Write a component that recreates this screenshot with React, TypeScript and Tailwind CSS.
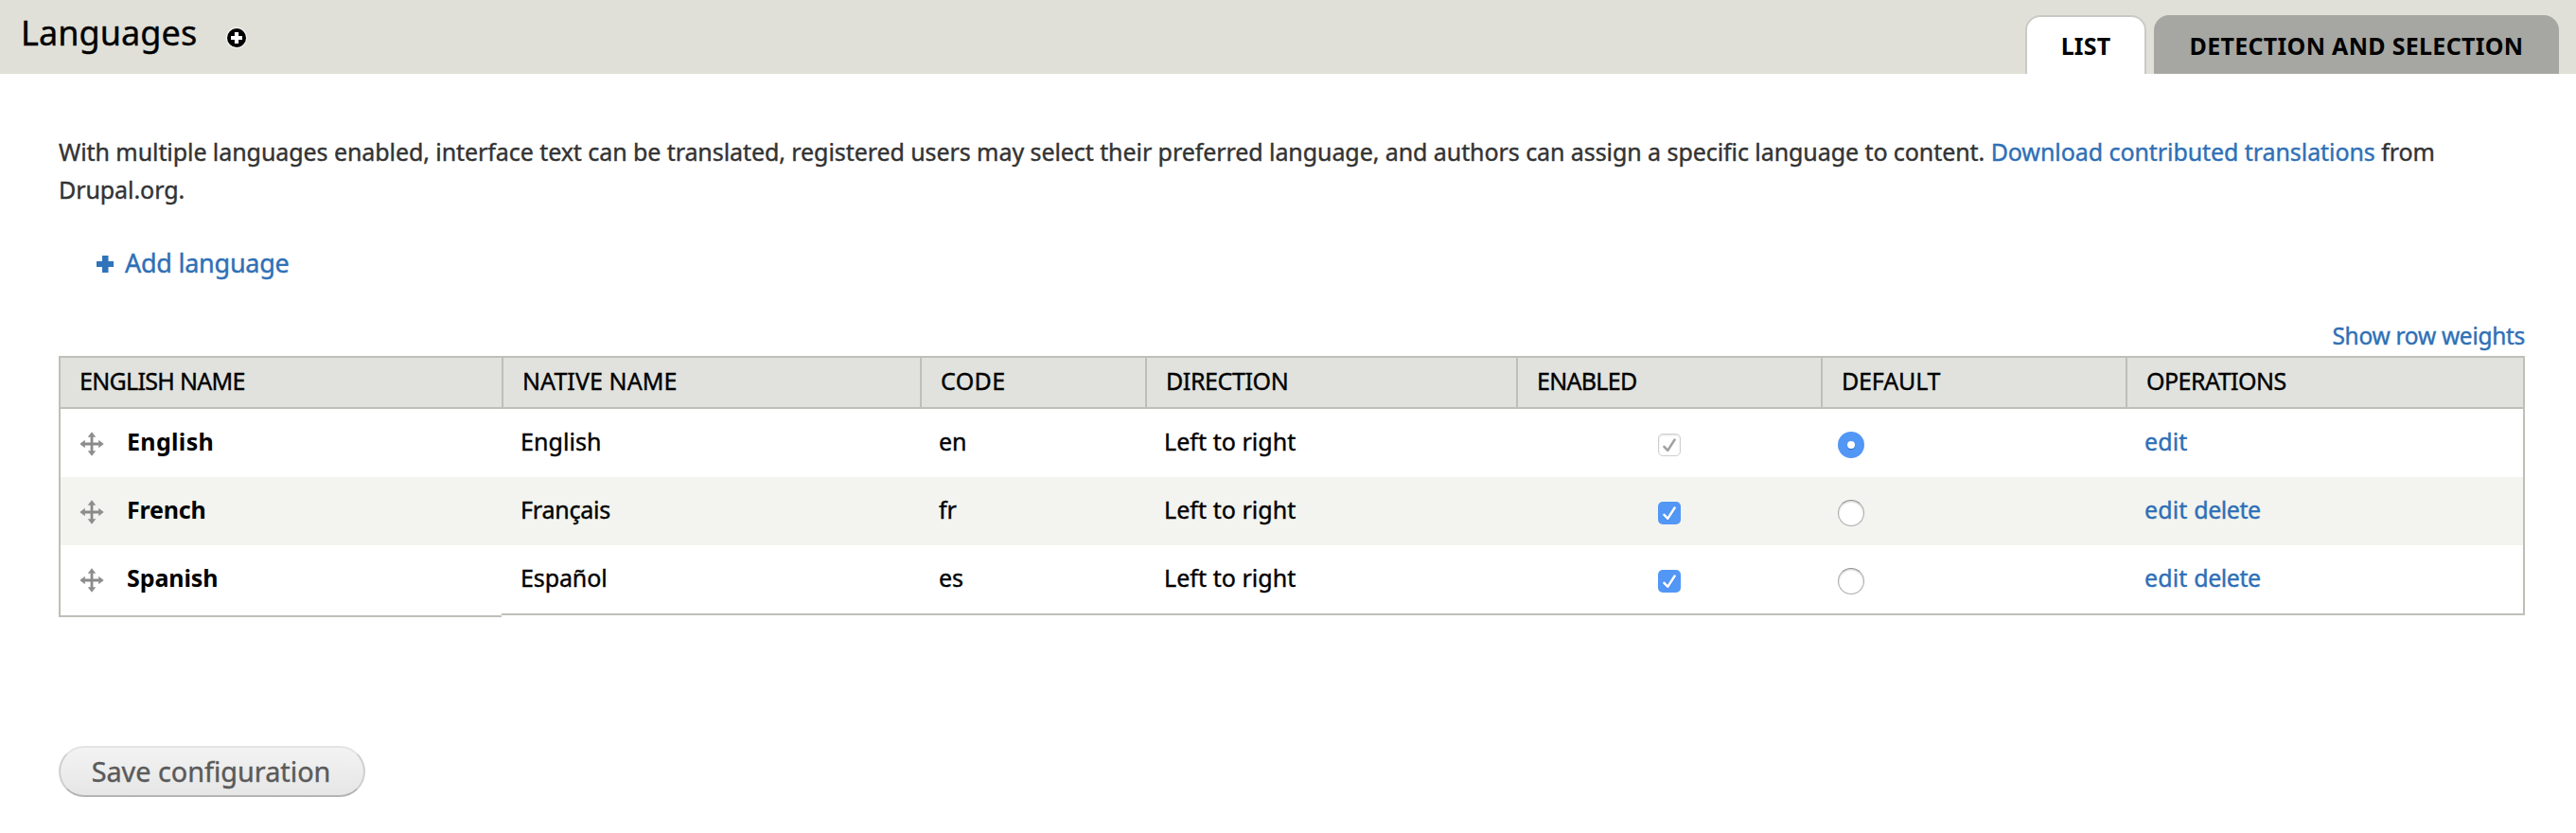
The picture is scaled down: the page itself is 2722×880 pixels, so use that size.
import type { ReactNode } from "react";
import { clsx } from "clsx";

const GRID = "grid grid-cols-[468px_442px_238px_392px_322px_322px_422px]";

const headers = [
  { label: "English name", spacing: "tracking-[-0.69px] pl-[20px]" },
  { label: "Native name", spacing: "tracking-[0.08px] pl-[20px]" },
  { label: "Code", spacing: "tracking-[0.35px] pl-[20px]" },
  { label: "Direction", spacing: "tracking-[-0.4px] pl-[20px]" },
  { label: "Enabled", spacing: "tracking-[-0.7px] pl-[20px]" },
  { label: "Default", spacing: "tracking-[-0.15px] pl-[20px]" },
  { label: "Operations", spacing: "tracking-[-0.52px] pl-[20px]" },
];

type Language = {
  name: string;
  nameSpacing: string;
  native: string;
  nativeSpacing: string;
  code: string;
  isDefault?: boolean;
};

const languages: Language[] = [
  {
    name: "English",
    nameSpacing: "tracking-[0.33px]",
    native: "English",
    nativeSpacing: "tracking-[0.07px]",
    code: "en",
    isDefault: true,
  },
  {
    name: "French",
    nameSpacing: "tracking-[-0.18px]",
    native: "Français",
    nativeSpacing: "tracking-[-0.2px]",
    code: "fr",
  },
  {
    name: "Spanish",
    nameSpacing: "tracking-[-0.1px]",
    native: "Español",
    nativeSpacing: "tracking-[-0.12px]",
    code: "es",
  },
];

function AddShortcutIcon() {
  return (
    <svg width="24" height="24" viewBox="0 0 24 24" aria-hidden="true">
      <circle cx="12" cy="12" r="11.3" fill="#f3f3f0" />
      <circle cx="12" cy="12" r="10" fill="#000" />
      <path d="M9.9 6h4.2v3.9H18v4.2h-3.9V18H9.9v-3.9H6V9.9h3.9z" fill="#fff" />
    </svg>
  );
}

function PlusIcon() {
  return (
    <svg width="18" height="18" viewBox="0 0 18 18" aria-hidden="true">
      <path d="M6 0h6.500v6H18v6h-5.500v6H6v-6H0V6h6z" fill="#2f74ba" />
    </svg>
  );
}

function MoveIcon() {
  return (
    <svg width="26" height="26" viewBox="0 0 26 26" aria-hidden="true">
      <path d="M13 3v20M3 13h20" stroke="#8a8a8a" strokeWidth="2.8" />
      <path
        d="M13 .3l4.300 5.500H8.700zM13 25.700l4.300-5.500H8.700zM.3 13l5.500-4.300v8.600zM25.700 13l-5.500-4.300v8.600z"
        fill="#8e8e8e"
      />
    </svg>
  );
}

function Checkbox({ disabled }: { disabled?: boolean }) {
  return (
    <span
      className={clsx(
        "block size-6 rounded-[5px]",
        disabled
          ? "border border-[#cfcfcf] bg-white shadow-[inset_0_1px_2px_rgba(0,0,0,0.12)]"
          : "bg-[#5297f5]",
      )}
    >
      <svg
        width="24"
        height="24"
        viewBox="0 0 24 24"
        className={clsx("block", disabled && "-m-px")}
        aria-hidden="true"
      >
        {!disabled && (
          <path
            d="M6.400 15.200l3.900 4L17.600 7.800"
            fill="none"
            stroke="#3d7fd9"
            strokeOpacity="0.6"
            strokeWidth="2.400"
            strokeLinecap="round"
            strokeLinejoin="round"
          />
        )}
        <path
          d="M6.400 13.900l3.900 4L17.600 6.500"
          fill="none"
          stroke={disabled ? "#a0a0a0" : "#fff"}
          strokeWidth="2.500"
          strokeLinecap="round"
          strokeLinejoin="round"
        />
      </svg>
    </span>
  );
}

function Radio({ checked }: { checked?: boolean }) {
  return checked ? (
    <span className="flex size-7 items-center justify-center rounded-full bg-[#5297f5]">
      <span className="size-2 rounded-full bg-white shadow-[0_1px_1px_rgba(20,70,150,0.5)]" />
    </span>
  ) : (
    <span className="block size-7 rounded-full border border-[#adadad] border-t-[#949494] bg-white shadow-[inset_0_1px_2px_rgba(0,0,0,0.22)]" />
  );
}

function Link({ children, className }: { children: ReactNode; className?: string }) {
  return (
    <a href="#" className={clsx("text-[#2f70b6]", className)}>
      {children}
    </a>
  );
}

function LanguageRow({ language, striped, last }: { language: Language; striped: boolean; last: boolean }) {
  const cell = clsx("flex items-center", last ? "h-[74px] border-b-2 border-[#bebfb9]" : "h-[72px]");
  const text = "pb-[5px]";
  return (
    <div className={clsx(GRID, "items-start", striped ? "bg-[#f3f4ef]" : "bg-white")}>
      <div
        className={clsx(
          "flex border-l-2 border-[#bebfb9] pl-[20px]",
          last ? "h-[76px] border-b-2" : "h-[72px]",
        )}
      >
        <div className="flex h-[72px] items-center">
          <span className="pt-[2px]">
            <MoveIcon />
          </span>
          <span
            className={clsx(
              "pb-[5px] pl-[24px] font-bold [-webkit-text-stroke:0px]",
              language.nameSpacing,
            )}
          >
            {language.name}
          </span>
        </div>
      </div>
      <div className={clsx(cell, text, "pl-[20px]", language.nativeSpacing)}>{language.native}</div>
      <div className={clsx(cell, text, "pl-[20px]")}>{language.code}</div>
      <div className={clsx(cell, text, "pl-[20px] tracking-[0.06px]")}>Left to right</div>
      <div className={clsx(cell, "pt-[4px] pl-[150px]")}>
        <Checkbox disabled={language.isDefault} />
      </div>
      <div className={clsx(cell, "pt-[4px] pl-[18px]")}>
        <Radio checked={language.isDefault} />
      </div>
      <div className={clsx(cell, text, "gap-[7px] border-r-2 border-r-[#bebfb9] pl-[20px]")}>
        <Link className="tracking-[0.1px]">edit</Link>
        {!language.isDefault && <Link className="tracking-[-0.5px]">delete</Link>}
      </div>
    </div>
  );
}

export default function App() {
  return (
    <div className="h-[880px] w-[2722px] overflow-hidden bg-white font-['Noto_Sans',sans-serif] text-[25px] leading-[40px] text-black [-webkit-text-stroke:0.4px]">
      <header className="flex h-[78px] items-start justify-between bg-[#e0e0d8] pr-[18px] pl-[22px]">
        <div className="flex items-start">
          <h1 className="pt-[11px] text-[36px] leading-[48px] tracking-[0.08px]">Languages</h1>
          <span className="pt-[28px] pl-[30px]">
            <AddShortcutIcon />
          </span>
        </div>
        <nav className="flex gap-[8px] pt-[16px] font-bold uppercase [-webkit-text-stroke:0px]">
          <a
            href="#"
            className="flex h-[62px] w-[128px] items-center justify-center rounded-t-[16px] border-2 border-b-0 border-[#c9cac5] bg-white tracking-[0.2px]"
          >
            List
          </a>
          <a
            href="#"
            className="flex h-[62px] w-[428px] items-center justify-center rounded-t-[16px] bg-[#a6a7a2] pt-[2px] tracking-[0.3px]"
          >
            Detection and selection
          </a>
        </nav>
      </header>

      <main className="px-[62px] pr-[54px] pt-[62px]">
        <p className="w-[2560px] tracking-[-0.07px] text-[#333]">
          With multiple languages enabled, interface text can be translated, registered users may select their
          preferred language, and authors can assign a specific language to content.{" "}
          <Link>Download contributed translations</Link> from Drupal.org.
        </p>

        <div className="flex items-center gap-[12px] pt-[38px] pl-[40px]">
          <span className="pt-[1px]">
            <PlusIcon />
          </span>
          <Link className="text-[27px] tracking-[-0.25px]">Add language</Link>
        </div>

        <div className="mt-[37px] flex justify-end">
          <Link className="text-[24.5px] tracking-[-0.3px]">Show row weights</Link>
        </div>

        <div className="mt-[1px]">
          <div className={clsx(GRID, "h-[56px] border-y-2 border-r-2 border-[#bebfb9] bg-[#e1e2dd] uppercase")}>
            {headers.map((header) => (
              <div
                key={header.label}
                className={clsx("flex items-center border-l-2 border-[#bebfb9] pb-[5px]", header.spacing)}
              >
                {header.label}
              </div>
            ))}
          </div>
          {languages.map((language, index) => (
            <LanguageRow
              key={language.name}
              language={language}
              striped={index % 2 === 1}
              last={index === languages.length - 1}
            />
          ))}
        </div>

        <button
          type="button"
          className="mt-[136px] flex h-[54px] w-[324px] items-center justify-center rounded-full border-2 border-[#cfcfcf] border-t-[#e4e4e4] border-b-[#b4b4b4] bg-linear-to-b from-[#f3f3f3] to-[#e6e6e6] pr-[2px] text-[28.8px] text-[#5a5a5a]"
        >
          Save configuration
        </button>
      </main>
    </div>
  );
}
